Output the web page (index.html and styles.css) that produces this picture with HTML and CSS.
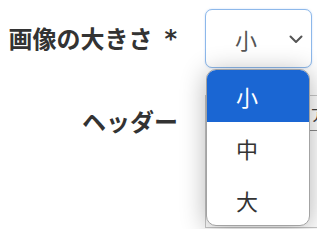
FILE: index.html
```html
<!DOCTYPE html>
<html lang="ja">
<head>
<meta charset="utf-8">
<link rel="stylesheet" href="styles.css">
</head>
<body>
<div class="form">
  <div class="row row-size">
    <label class="label">画像の大きさ<span class="req">*</span></label>
    <div class="field">
      <div class="select">
        <span class="select-value">小</span>
        <svg class="chevron" width="14" height="9" viewBox="0 0 14 9"><path d="M1.5 1.5 L7 7 L12.5 1.5" fill="none" stroke="#555" stroke-width="2" stroke-linecap="round" stroke-linejoin="round"/></svg>
      </div>
      <ul class="listbox">
        <li class="option selected">小</li>
        <li class="option">中</li>
        <li class="option">大</li>
      </ul>
    </div>
  </div>
  <div class="row row-header">
    <label class="label label-top">ヘッダー</label>
    <div class="field">
      <div class="editor">
        <div class="toolbar">デフォルトのアイコン</div>
        <div class="editor-body"></div>
      </div>
    </div>
  </div>
</div>
</body>
</html>
```
FILE: styles.css
```css
html, body {
  margin: 0;
  padding: 0;
  background: #fff;
  overflow: hidden;
}
body {
  width: 317px;
  height: 229px;
  font-family: "Noto Sans CJK JP", "Noto Sans", sans-serif;
  color: #333;
}
.form {
  display: flex;
  flex-direction: column;
  gap: 27px;
  padding-top: 9px;
}
.row {
  display: flex;
  align-items: center;
  gap: 27px;
}
.row-header {
  align-items: flex-start;
}
.label {
  width: 178px;
  flex: none;
  text-align: right;
  font-weight: 700;
  font-size: 24px;
  line-height: 1;
  color: #333;
  white-space: nowrap;
}
.label-top {
  margin-top: 14px;
}
.req {
  font-family: "DejaVu Sans", sans-serif;
  font-weight: 700;
  font-size: 24px;
  margin-left: 12px;
  margin-right: 1px;
  position: relative;
  top: -1px;
}
.field {
  position: relative;
  flex: none;
}
.select {
  box-sizing: border-box;
  width: 107px;
  height: 59px;
  border: 1px solid #8db8ea;
  border-radius: 7px;
  box-shadow: 0 0 2px rgba(90, 150, 230, 0.35);
  background: #fff;
  display: flex;
  align-items: center;
  padding-left: 29px;
  padding-right: 8px;
  justify-content: space-between;
}
.select-value {
  font-size: 22px;
  color: #555;
  line-height: 1;
}
.chevron {
  display: block;
  margin-top: 2px;
}
.listbox {
  position: absolute;
  z-index: 2;
  top: 60px;
  left: 1px;
  box-sizing: border-box;
  width: 104px;
  height: 157px;
  margin: 0;
  padding: 0;
  list-style: none;
  background: #fff;
  border: 1.5px solid #a3a3a3;
  border-radius: 10px;
  overflow: hidden;
  box-shadow: 0 3px 26px rgba(0, 0, 0, 0.3);
}
.option {
  height: 52px;
  display: flex;
  align-items: center;
  padding-left: 29px;
  font-size: 22px;
  color: #333;
  line-height: 1;
}
.option.selected {
  background: #1a66d3;
  color: #fff;
}
.editor {
  box-sizing: border-box;
  width: 200px;
  height: 133px;
  border: 1px solid #c8c8c8;
  background: #fff;
}
.toolbar {
  box-sizing: border-box;
  height: 35px;
  border-bottom: 1px solid #8a8a8a;
  padding: 10px 0 0 8px;
  font-size: 16px;
  line-height: 1;
  color: #444;
  white-space: nowrap;
  overflow: hidden;
}
```
